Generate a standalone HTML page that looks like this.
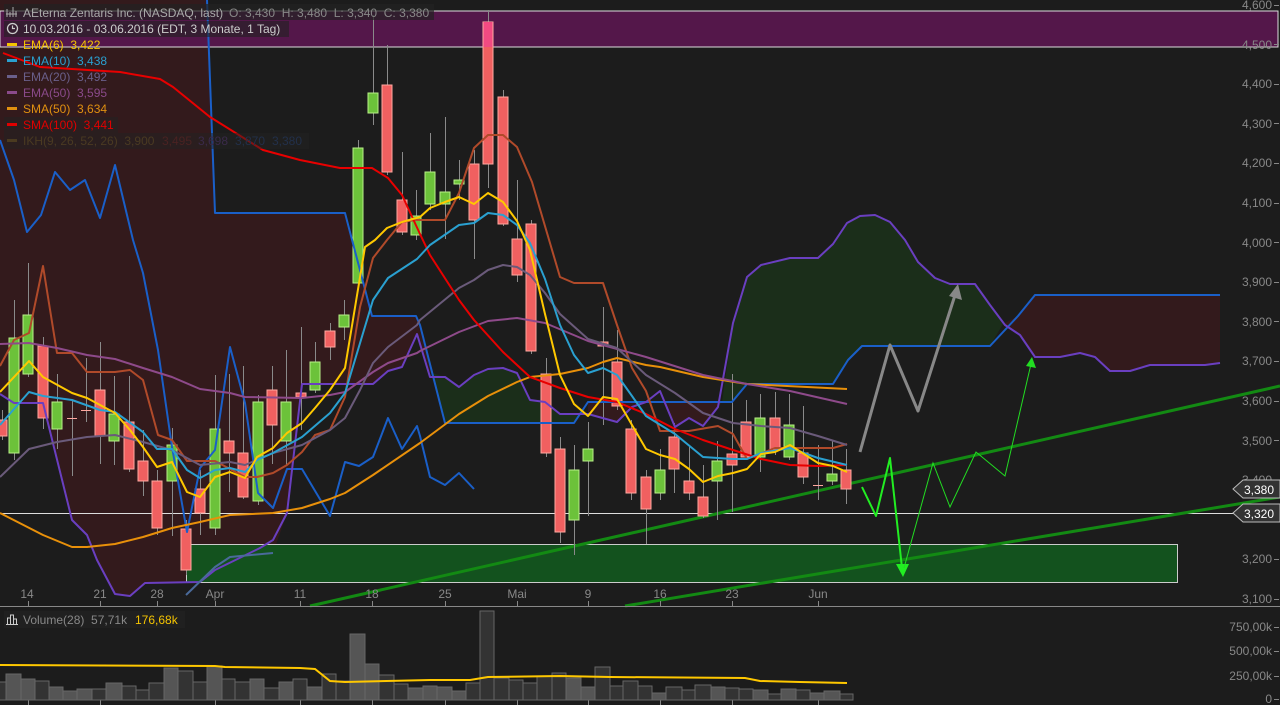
<!DOCTYPE html>
<html><head><meta charset="utf-8"><style>
html,body{margin:0;padding:0;background:#1c1c1c;width:1280px;height:705px;overflow:hidden}
svg{display:block;font-family:"Liberation Sans",sans-serif}
svg text{white-space:pre}
</style></head><body>
<svg width="1280" height="705" viewBox="0 0 1280 705" xmlns="http://www.w3.org/2000/svg" xml:space="preserve">
<rect width="1280" height="705" fill="#1c1c1c"/>
<polygon fill="#331a1c" points="0,0 207,0 215,213 345,213 372,316 416,316 432,372 430,373 417,334 402,367 388,371 373,384 302,384 287,513 273,553 230,560 200,582 145,583 130,596 115,594 97,560 87,535 72,520 43,403 14,403 0,394"/>
<polygon fill="#1b2e1a" points="432,373 445,377 459,387 474,375 488,369 503,368 517,373 530,400 545,402 560,414 582,414 588,402 574,423 445,423"/>
<polygon fill="#331a1c" points="588,402 646,402 632,407 617,422 588,414"/>
<polygon fill="#331a1c" points="663,402 722,402 718,407 703,426 689,418 675,427"/>
<polygon fill="#1b2e1a" points="722,402 733,323 747,277 761,265 790,258 818,258 833,244 847,223 860,216 875,215 890,222 905,240 918,262 935,278 950,284 975,284 990,305 1003,324 990,346 862,346 848,360 833,384 747,384 733,402"/>
<polygon fill="#331a1c" points="1003,324 1018,316 1035,295 1220,295 1220,363 1205,365 1150,365 1130,371 1110,371 1095,357 1080,353 1060,357 1035,357 1020,335"/>
<rect x="0" y="11" width="1278" height="36" fill="#54174a" stroke="#ddd" stroke-width="1"/>
<rect x="186.5" y="544.5" width="991" height="38" fill="#13521e" stroke="#ccc" stroke-width="1"/>
<line x1="0" y1="513.5" x2="1236" y2="513.5" stroke="#ddd" stroke-width="1"/>
<line x1="310" y1="606" x2="1280" y2="386" stroke="#138a13" stroke-width="3"/>
<line x1="625" y1="606" x2="1280" y2="497" stroke="#138a13" stroke-width="3"/>
<g stroke="#8a8a8a" stroke-width="1">
<path d="M2.5 410V440M14.5 300V460M28.5 263V377M43.5 337V429M57.5 374V449M72.5 400V476M86.5 358V422M100.5 342V464M114.5 376V465M129.5 376V472M143.5 430V496M157.5 470V535M172.5 428V536M186.5 520V575M200.5 470V535M215.5 375V535M229.5 374V492M243.5 366V499M258.5 395V505M272.5 366V464M286.5 350V465M301.5 327V430M315.5 342V393M330.5 323V360M344.5 300V340M358.5 140V290M373.5 15V125M387.5 45V175M402.5 152V235M416.5 190V240M430.5 133V210M445.5 117V239M459.5 160V200M474.5 150V259M488.5 10V188M503.5 90V226M517.5 180V282M531.5 220V354M546.5 358V457M560.5 437V543M574.5 445V555M588.5 422V516M603.5 307V425M617.5 330V410M631.5 420V500M646.5 470V544M660.5 449V500M674.5 423V493M689.5 445V500M703.5 465V518M717.5 441V520M732.5 374V512M746.5 400V460M760.5 394V472M775.5 392V455M789.5 394V460M803.5 406V484M818.5 445V500M832.5 441V485M846.5 449V504"/>
</g>
<g fill="#f06060" stroke="#ffa8a0" stroke-width="1">
<rect x="-3" y="420" width="10" height="16"/><rect x="38" y="346" width="10" height="72"/><rect x="95" y="390" width="10" height="46"/><rect x="124" y="422" width="10" height="47"/><rect x="138" y="461" width="10" height="20"/><rect x="152" y="481" width="10" height="47"/><rect x="181" y="529" width="10" height="41"/><rect x="195" y="489" width="10" height="24"/><rect x="224" y="441" width="10" height="12"/><rect x="238" y="453" width="10" height="44"/><rect x="267" y="390" width="10" height="35"/><rect x="296" y="393" width="10" height="4"/><rect x="325" y="331" width="10" height="16"/><rect x="382" y="85" width="10" height="87"/><rect x="397" y="200" width="10" height="32"/><rect x="469" y="164" width="10" height="56"/><rect x="483" y="22" width="10" height="142"/><rect x="498" y="97" width="10" height="127"/><rect x="512" y="239" width="10" height="36"/><rect x="526" y="224" width="10" height="127"/><rect x="541" y="374" width="10" height="79"/><rect x="555" y="449" width="10" height="83"/><rect x="598" y="342" width="10" height="4"/><rect x="612" y="362" width="10" height="44"/><rect x="626" y="429" width="10" height="64"/><rect x="641" y="477" width="10" height="32"/><rect x="669" y="437" width="10" height="32"/><rect x="684" y="481" width="10" height="12"/><rect x="698" y="497" width="10" height="19"/><rect x="727" y="454" width="10" height="11"/><rect x="741" y="422" width="10" height="35"/><rect x="770" y="418" width="10" height="32"/><rect x="798" y="453" width="10" height="24"/><rect x="841" y="470" width="10" height="19"/>
</g>
<rect x="483.5" y="22" width="9" height="25" fill="#f24a82"/>
<g stroke="#ffa8a0" stroke-width="1"><path d="M67 418.5H77M81 410.5H91M813 485.5H823"/></g>
<g fill="#6cc23a" stroke="#b8f088" stroke-width="1">
<rect x="9" y="338" width="10" height="115"/><rect x="23" y="315" width="10" height="59"/><rect x="52" y="402" width="10" height="27"/><rect x="109" y="414" width="10" height="27"/><rect x="167" y="445" width="10" height="36"/><rect x="210" y="429" width="10" height="99"/><rect x="253" y="402" width="10" height="99"/><rect x="281" y="402" width="10" height="39"/><rect x="310" y="362" width="10" height="28"/><rect x="339" y="315" width="10" height="12"/><rect x="353" y="148" width="10" height="135"/><rect x="368" y="93" width="10" height="20"/><rect x="411" y="216" width="10" height="19"/><rect x="425" y="172" width="10" height="32"/><rect x="440" y="192" width="10" height="12"/><rect x="454" y="180" width="10" height="4"/><rect x="569" y="470" width="10" height="50"/><rect x="583" y="449" width="10" height="12"/><rect x="655" y="470" width="10" height="23"/><rect x="712" y="461" width="10" height="20"/><rect x="755" y="418" width="10" height="39"/><rect x="784" y="425" width="10" height="32"/><rect x="827" y="474" width="10" height="7"/>
</g>
<g fill="none" stroke-width="2" stroke-linejoin="round">
<polyline stroke="#1a5fc8" points="207,0 215,213 345,213 372,316 416,316 420,325 445,423 574,423 588,402 732,402 747,384 833,384 848,360 862,346 990,346 1018,316 1035,295 1220,295"/>
<polyline stroke="#1a5fc8" points="0,140 14,180 27,232 41,215 55,172 70,190 85,180 100,218 115,165 133,240 143,273 158,350 172,447 187,532 200,468 215,450 230,347 245,403 258,493 273,508 287,469 302,469 330,516 345,462 359,466 373,457 388,418 402,449 417,426 420,436 430,477 445,485 459,473 474,489"/>
<polyline stroke="#6a3fc0" points="0,394 14,403 43,403 72,520 87,535 97,560 115,594 130,596 145,583 200,582 215,570 260,548 273,540 287,513 302,384 373,384 388,371 402,367 417,334 430,377 445,377 459,387 474,375 488,369 503,368 517,373 530,400 545,402 560,414 588,414 617,422 632,407 646,402 660,391 675,427 689,418 703,426 718,407 733,323 747,277 761,265 790,258 818,258 833,244 847,223 860,216 875,215 890,222 905,240 918,262 935,278 950,284 975,284 990,305 1005,325 1020,335 1035,357 1060,357 1080,353 1095,357 1110,371 1130,371 1150,365 1205,365 1220,363"/>
<polyline stroke="#4a6a9a" points="186,595 215,567 230,557 273,553"/>
<polyline stroke="#b04a2a" points="0,366 14,340 29,333 43,266 57,353 72,353 87,372 115,372 130,370 143,380 158,435 172,440 187,461 215,461 245,477 257,477 273,473 287,465 302,452 315,435 330,430 345,397 360,307 373,258 387,240 402,222 416,220 445,220 459,193 474,148 488,135 503,135 517,147 532,182 560,277 574,283 603,283 617,325 632,368 646,391 660,431 689,431 718,426 733,434 747,459 775,448 833,448 847,444"/>
<polyline stroke="#e8900a" points="0,513 43,535 72,547 87,547 115,544 143,537 172,528 200,522 230,515 273,513 302,508 330,499 345,493 373,475 420,443 459,414 488,396 517,382 530,377 560,374 588,368 603,362 617,358 646,365 660,367 703,377 747,384 847,389"/>
<polyline stroke="#8e4a8a" points="0,344 29,343 57,348 87,355 115,359 143,368 172,377 200,389 230,393 245,397 302,398 330,395 345,392 373,372 388,363 417,353 420,351 459,332 488,321 517,318 545,323 588,341 646,357 703,375 747,384 790,391 847,404"/>
<polyline stroke="#6a5a7a" points="0,477 29,449 57,442 87,437 115,435 143,442 172,450 200,465 230,462 245,465 273,453 302,445 330,430 345,418 360,390 373,363 388,347 417,325 420,320 459,288 474,280 488,270 503,265 517,267 530,275 545,293 560,314 588,339 617,348 646,375 675,393 703,413 733,423 761,426 790,428 818,436 847,445"/>
<polyline stroke="#e80000" points="3,53 40,67 120,72 160,79 173,87 210,117 263,150 300,160 340,168 372,168 388,178 402,195 420,234 430,255 459,300 474,320 503,352 530,377 560,388 588,397 617,402 646,414 675,429 703,440 733,450 761,459 790,465 818,466 847,465"/>
<polyline stroke="#2aa0d0" points="0,425 29,392 43,396 72,400 100,410 115,412 143,432 157,449 172,449 187,470 200,478 215,470 230,468 245,472 257,460 273,453 302,437 330,413 345,393 373,300 388,278 417,259 430,245 459,225 474,223 488,213 503,215 517,225 530,243 545,279 560,325 574,355 588,373 603,368 617,375 632,396 646,416 675,434 703,457 733,459 747,459 761,453 790,448 818,458 847,465"/>
<polyline stroke="#ffc800" points="0,392 29,361 43,377 72,393 87,398 115,413 130,430 143,447 157,467 172,462 187,492 200,497 215,477 230,472 245,478 257,457 273,448 287,433 302,423 315,408 330,390 345,368 365,247 375,240 387,228 402,222 420,217 430,208 445,202 459,197 474,204 488,193 503,202 517,221 530,250 545,314 560,375 574,404 588,416 603,397 617,399 632,425 646,449 660,455 675,459 689,469 703,482 718,476 733,473 747,469 761,454 775,452 790,445 804,454 818,463 833,466 847,472"/>
</g>
<polyline fill="none" stroke="#888" stroke-width="3" stroke-linejoin="round" points="860,452 890,345 918,411 956,292"/>
<polygon fill="#888" points="958,284 962,300 949,296"/>
<polyline fill="none" stroke="#22ee22" stroke-width="2" stroke-linejoin="round" points="862,487 876,516 890,458 902,568"/>
<polygon fill="#22ee22" points="903,577 896,564 909,564"/>
<polyline fill="none" stroke="#22dd22" stroke-width="1" points="904,568 933,463 950,507 976,452 1005,476 1031,364"/>
<polygon fill="#22dd22" points="1032,357 1036,368 1026,366"/>
<g font-size="12">
<rect x="4" y="4" width="430" height="16" fill="#222" opacity="0.7"/>
<text x="23" y="17" fill="#aaa">AEterna Zentaris Inc. (NASDAQ, last)</text>
<text x="229" y="17" fill="#888">O: 3,430  H: 3,480  L: 3,340  C: 3,380</text>
<path d="M7 17V9M10 17V12M13 17V7M16 17V11M6 14H17" stroke="#aaa" stroke-width="1" fill="none"/>
<rect x="4" y="21" width="285" height="16" fill="#222" opacity="0.6"/>
<circle cx="12.5" cy="28.5" r="5" fill="none" stroke="#ccc" stroke-width="1.3"/><path d="M12.5 25.5V28.5H15" stroke="#ccc" stroke-width="1.2" fill="none"/>
<text x="23" y="33" fill="#ccc">10.03.2016 - 03.06.2016 (EDT, 3 Monate, 1 Tag)</text>
<rect x="7" y="43" width="10" height="3" fill="#f5c400"/><text x="23" y="49" fill="#f5c400">EMA(6)  3,422</text>
<rect x="7" y="59" width="10" height="3" fill="#2aa0d0"/><text x="23" y="65" fill="#2aa0d0">EMA(10)  3,438</text>
<rect x="7" y="75" width="10" height="3" fill="#6a5f8a"/><text x="23" y="81" fill="#6a5f8a">EMA(20)  3,492</text>
<rect x="7" y="91" width="10" height="3" fill="#8a4a8a"/><text x="23" y="97" fill="#8a4a8a">EMA(50)  3,595</text>
<rect x="7" y="107" width="10" height="3" fill="#e09010"/><text x="23" y="113" fill="#e09010">SMA(50)  3,634</text>
<rect x="4" y="117" width="114" height="16" fill="#222" opacity="0.5"/>
<rect x="7" y="123" width="10" height="3" fill="#e00000"/><text x="23" y="129" fill="#e00000">SMA(100)  3,441</text>
<rect x="4" y="133" width="305" height="16" fill="#222" opacity="0.5"/>
<rect x="7" y="139" width="10" height="3" fill="#4a3a20"/><text x="23" y="145" fill="#4a3a22">IKH(9, 26, 52, 26)  3,900</text><text x="162" y="145" fill="#4a2222">3,495</text><text x="198" y="145" fill="#3a2a4a">3,698</text><text x="235" y="145" fill="#22304a">3,870</text><text x="272" y="145" fill="#22304a">3,380</text>
</g>
<g font-size="12" fill="#888" text-anchor="end">
<text x="1272" y="9">4,600</text><text x="1272" y="49">4,500</text><text x="1272" y="88">4,400</text><text x="1272" y="128">4,300</text><text x="1272" y="167">4,200</text><text x="1272" y="207">4,100</text><text x="1272" y="247">4,000</text><text x="1272" y="286">3,900</text><text x="1272" y="326">3,800</text><text x="1272" y="365">3,700</text><text x="1272" y="405">3,600</text><text x="1272" y="445">3,500</text><text x="1272" y="484">3,400</text><text x="1272" y="563">3,200</text><text x="1272" y="603">3,100</text>
<text x="1272" y="631">750,00k</text><text x="1272" y="655">500,00k</text><text x="1272" y="680">250,00k</text><text x="1272" y="703">0</text>
</g>
<g stroke="#888"><path d="M1274 5.5H1279M1274 44.5H1279M1274 84.5H1279M1274 123.5H1279M1274 163.5H1279M1274 203.5H1279M1274 242.5H1279M1274 282.5H1279M1274 321.5H1279M1274 361.5H1279M1274 401.5H1279M1274 440.5H1279M1274 480.5H1279M1274 559.5H1279M1274 599.5H1279M1274 627.5H1279M1274 651.5H1279M1274 676.5H1279M1274 699.5H1279"/></g>
<polygon points="1233,489 1243,480 1280,480 1280,498 1243,498" fill="#333" stroke="#bbb"/>
<text x="1244" y="494" font-size="12" fill="#fff">3,380</text>
<polygon points="1233,513 1243,504 1280,504 1280,522 1243,522" fill="#333" stroke="#bbb"/>
<text x="1244" y="518" font-size="12" fill="#fff">3,320</text>
<g font-size="12" fill="#888" text-anchor="middle">
<text x="27" y="598">14</text><text x="100" y="598">21</text><text x="157" y="598">28</text><text x="215" y="598">Apr</text><text x="300" y="598">11</text><text x="372" y="598">18</text><text x="445" y="598">25</text><text x="517" y="598">Mai</text><text x="588" y="598">9</text><text x="660" y="598">16</text><text x="732" y="598">23</text><text x="818" y="598">Jun</text>
</g>
<line x1="0" y1="606.5" x2="1280" y2="606.5" stroke="#888"/>
<g stroke="#888"><path d="M28.5 601V606M100.5 601V606M157.5 601V606M215.5 601V606M300.5 601V606M372.5 601V606M445.5 601V606M517.5 601V606M588.5 601V606M660.5 601V606M732.5 601V606M818.5 601V606M28.5 700V705M100.5 700V705M215.5 700V705M300.5 700V705M372.5 700V705M445.5 700V705M517.5 700V705M588.5 700V705M660.5 700V705M732.5 700V705M818.5 700V705"/></g>
<g stroke="#666" stroke-width="1">
<rect x="-1" y="682" width="7" height="18" fill="#333"/><rect x="6" y="674" width="15" height="26" fill="#555"/><rect x="21" y="679" width="14" height="21" fill="#555"/><rect x="35" y="681" width="14" height="19" fill="#333"/><rect x="49" y="687" width="14" height="13" fill="#555"/><rect x="63" y="691" width="14" height="9" fill="#555"/><rect x="77" y="689" width="15" height="11" fill="#555"/><rect x="92" y="689" width="14" height="11" fill="#333"/><rect x="106" y="683" width="16" height="17" fill="#555"/><rect x="122" y="686" width="14" height="14" fill="#333"/><rect x="136" y="690" width="13" height="10" fill="#333"/><rect x="149" y="683" width="15" height="17" fill="#333"/><rect x="164" y="668" width="14" height="32" fill="#555"/><rect x="178" y="671" width="15" height="29" fill="#333"/><rect x="193" y="682" width="14" height="18" fill="#333"/><rect x="207" y="666" width="15" height="34" fill="#555"/><rect x="222" y="679" width="13" height="21" fill="#333"/><rect x="235" y="682" width="15" height="18" fill="#333"/><rect x="250" y="679" width="14" height="21" fill="#555"/><rect x="264" y="688" width="15" height="12" fill="#333"/><rect x="279" y="682" width="14" height="18" fill="#555"/><rect x="293" y="679" width="14" height="21" fill="#333"/><rect x="307" y="687" width="15" height="13" fill="#555"/><rect x="322" y="674" width="14" height="26" fill="#333"/><rect x="336" y="681" width="14" height="19" fill="#333"/><rect x="350" y="634" width="15" height="66" fill="#555"/><rect x="365" y="664" width="14" height="36" fill="#555"/><rect x="379" y="675" width="15" height="25" fill="#333"/><rect x="394" y="684" width="14" height="16" fill="#333"/><rect x="408" y="688" width="15" height="12" fill="#555"/><rect x="423" y="686" width="14" height="14" fill="#555"/><rect x="437" y="687" width="15" height="13" fill="#555"/><rect x="452" y="691" width="14" height="9" fill="#555"/><rect x="466" y="683" width="14" height="17" fill="#333"/><rect x="480" y="611" width="14" height="89" fill="#333"/><rect x="494" y="678" width="15" height="22" fill="#333"/><rect x="509" y="680" width="14" height="20" fill="#333"/><rect x="523" y="683" width="14" height="17" fill="#333"/><rect x="537" y="676" width="15" height="24" fill="#333"/><rect x="552" y="673" width="14" height="27" fill="#333"/><rect x="566" y="678" width="15" height="22" fill="#555"/><rect x="581" y="687" width="14" height="13" fill="#555"/><rect x="595" y="667" width="15" height="33" fill="#333"/><rect x="610" y="686" width="13" height="14" fill="#333"/><rect x="623" y="681" width="15" height="19" fill="#333"/><rect x="638" y="686" width="14" height="14" fill="#333"/><rect x="652" y="693" width="14" height="7" fill="#555"/><rect x="666" y="687" width="16" height="13" fill="#333"/><rect x="682" y="690" width="13" height="10" fill="#333"/><rect x="695" y="685" width="16" height="15" fill="#333"/><rect x="711" y="687" width="14" height="13" fill="#555"/><rect x="725" y="688" width="14" height="12" fill="#333"/><rect x="739" y="689" width="14" height="11" fill="#333"/><rect x="753" y="690" width="15" height="10" fill="#555"/><rect x="768" y="694" width="13" height="6" fill="#333"/><rect x="781" y="689" width="15" height="11" fill="#555"/><rect x="796" y="690" width="14" height="10" fill="#333"/><rect x="810" y="693" width="14" height="7" fill="#555"/><rect x="824" y="691" width="16" height="9" fill="#555"/><rect x="840" y="694" width="13" height="6" fill="#333"/>
</g>
<polyline fill="none" stroke="#ffc800" stroke-width="2" points="0,665 215,666 225,667 300,668 315,669 330,681 345,682 430,680 470,680 488,677 560,676 610,677 745,678 760,681 800,682 847,683"/>
<rect x="4" y="611" width="181" height="17" fill="#222" opacity="0.8"/>
<path d="M7.5 624V618H10.5V624M10.5 624V615H13.5V624M13.5 624V619H16.5V624M6 624.5H18" stroke="#ccc" fill="none"/>
<text x="23" y="624" font-size="12" fill="#888">Volume(28)  57,71k</text>
<text x="135" y="624" font-size="12" fill="#f5c400">176,68k</text>
</svg>
</body></html>
